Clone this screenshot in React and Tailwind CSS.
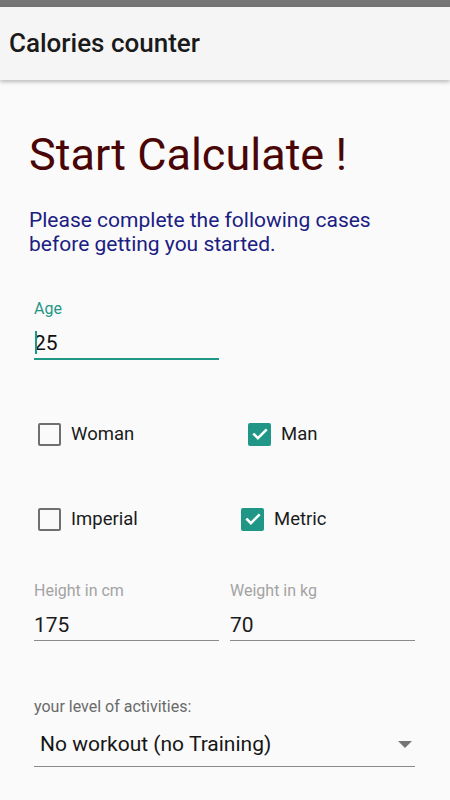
import React from 'react';

const CheckBox = ({ checked }) =>
  checked ? (
    <span className="flex h-[23px] w-[23px] items-center justify-center rounded-[2px] bg-[#1f9686]">
      <svg viewBox="0 0 24 24" className="h-[20px] w-[20px]" fill="none" stroke="#fff" strokeWidth="3" strokeLinecap="square">
        <path d="M5 12.5l4.5 4.5L19 7.5" />
      </svg>
    </span>
  ) : (
    <span className="block h-[23px] w-[23px] rounded-[2px] border-2 border-[#6f6f6f]" />
  );

const Check = ({ label, checked, className = '' }) => (
  <div className={`flex items-center gap-[10px] ${className}`}>
    <CheckBox checked={checked} />
    <span className="text-[18.5px] leading-[24px] text-[#1b1b1b]">{label}</span>
  </div>
);

const Field = ({ label, value, className = '' }) => (
  <div className={className}>
    <div className="text-[16px] leading-[18px] text-[#a3a3a3]">{label}</div>
    <div className="mt-[12px] border-b border-[#8a8a8a] pb-[2px] text-[21px] leading-[26px] text-[#1b1b1b]">{value}</div>
  </div>
);

export default function App() {
  return (
    <div className="min-h-[800px] w-[450px] bg-[#fafafa] font-['Roboto',sans-serif]">
      <div className="h-[7px] bg-[#757575]" />
      <header className="flex h-[73px] items-center bg-[#f5f5f5] pl-[9px] shadow-[0_2px_4px_rgba(0,0,0,0.25)]">
        <h1 className="text-[26px] font-medium text-[#1a1a1a]">Calories counter</h1>
      </header>

      <main className="px-[29px]">
        <h2 className="mt-[49px] text-[45px] leading-[52px] text-[#4a0606]">Start Calculate !</h2>
        <p className="mt-[27px] text-[21px] leading-[24px] text-[#1a2082]">
          Please complete the following cases
          <br />
          before getting you started.
        </p>

        <div className="ml-[5px] mt-[44px] w-[185px]">
          <div className="text-[16px] leading-[18px] text-[#1f9686]">Age</div>
          <div className="relative mt-[11px] border-b-2 border-[#1f9686] pb-[1px] text-[21px] leading-[28px] text-[#111]">
            <span className="absolute left-[1px] top-[2px] h-[23px] w-[2px] bg-[#1f9686]" />
            25
          </div>
        </div>

        <div className="ml-[9px] mt-[62px] flex">
          <Check label="Woman" className="w-[210px]" />
          <Check label="Man" checked />
        </div>
        <div className="ml-[9px] mt-[61px] flex">
          <Check label="Imperial" className="w-[203px]" />
          <Check label="Metric" checked />
        </div>

        <div className="ml-[5px] mt-[51px] flex gap-[11px]">
          <Field label="Height in cm" value="175" className="w-[185px]" />
          <Field label="Weight in kg" value="70" className="w-[185px]" />
        </div>

        <div className="ml-[5px] mt-[57px] w-[381px]">
          <div className="text-[16px] leading-[18px] text-[#6a6a6a]">your level of activities:</div>
          <div className="mt-[15px] flex items-center justify-between border-b border-[#8a8a8a] pb-[9px] pl-[6px] pr-[3px]">
            <span className="text-[21px] leading-[26px] text-[#161616]">No workout (no Training)</span>
            <svg viewBox="0 0 14 7" className="h-[7px] w-[14px]">
              <path d="M0 0h14L7 7z" fill="#767676" />
            </svg>
          </div>
        </div>
      </main>
    </div>
  );
}
